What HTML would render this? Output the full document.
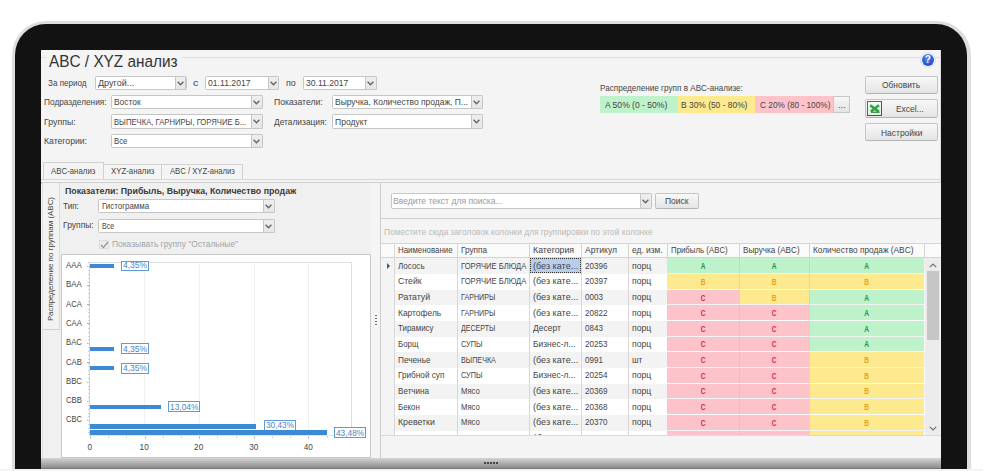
<!DOCTYPE html>
<html><head><meta charset="utf-8"><style>
html,body{margin:0;padding:0;width:983px;height:471px;overflow:hidden;background:#fff;}
body{position:relative;font-family:"Liberation Sans", sans-serif;}
.t{position:absolute;white-space:nowrap;line-height:1;font-family:"Liberation Sans", sans-serif;}
</style></head><body>
<div style="position:absolute;left:11.5px;top:20.5px;width:959px;height:470px;border-radius:34px 34px 0 0;background:#dedede;"></div>
<div style="position:absolute;left:15px;top:23.5px;width:952px;height:445.2px;border-radius:31px 31px 0 0;background:#121212;"></div>
<div style="position:absolute;left:0;top:468.7px;width:983px;height:3px;background:#f4f4f4;"></div>
<div style="position:absolute;left:41px;top:50px;width:900px;height:418.7px;background:#f4f4f4;overflow:hidden;"></div>
<div style="position:absolute;left:41px;top:56.5px;width:5px;height:1px;background:#dedede"></div>
<div style="position:absolute;left:182px;top:56.5px;width:759px;height:1px;background:#dedede"></div>
<div class="t" style="left:49.3px;top:53.45px;font-size:16.3px;color:#333;font-weight:400;transform:scaleX(0.9433);transform-origin:0 0;">ABC / XYZ анализ</div>
<div class="t" style="left:48.3px;top:79.78px;font-size:8.2px;color:#454545;font-weight:400;transform:scaleX(0.9884);transform-origin:0 0;">За период</div>
<div style="position:absolute;left:95px;top:75.7px;width:91.5px;height:14px;background:#fff;box-sizing:border-box;border:1px solid #c6c6c6;border-radius:1.5px;"></div>
<div style="position:absolute;left:175.3px;top:75.7px;width:11.2px;height:14px;background:linear-gradient(#eeeeee,#e6e6e6);box-sizing:border-box;border:1px solid #c6c6c6;border-radius:0 1.5px 1.5px 0;"></div>
<svg width="7" height="5" viewBox="0 0 7 5" style="position:absolute;left:177.4px;top:80.5px"><path d="M0.6 0.8 L3.5 3.8 L6.4 0.8" fill="none" stroke="#666" stroke-width="1.4"/></svg>
<div class="t" style="left:97.6px;top:79.73px;font-size:8.2px;color:#454545;font-weight:400;transform:scaleX(1.1036);transform-origin:0 0;">Другой...</div>
<div class="t" style="left:193px;top:79.78px;font-size:8.2px;color:#454545;font-weight:400;transform:scaleX(1.3453);transform-origin:0 0;">с</div>
<div style="position:absolute;left:205.3px;top:75.7px;width:74.2px;height:14px;background:#fff;box-sizing:border-box;border:1px solid #c6c6c6;border-radius:1.5px;"></div>
<div style="position:absolute;left:267.7px;top:75.7px;width:11.8px;height:14px;background:linear-gradient(#eeeeee,#e6e6e6);box-sizing:border-box;border:1px solid #c6c6c6;border-radius:0 1.5px 1.5px 0;"></div>
<svg width="7" height="5" viewBox="0 0 7 5" style="position:absolute;left:270.09999999999997px;top:80.5px"><path d="M0.6 0.8 L3.5 3.8 L6.4 0.8" fill="none" stroke="#666" stroke-width="1.4"/></svg>
<div class="t" style="left:207.7px;top:79.73px;font-size:8.2px;color:#454545;font-weight:400;transform:scaleX(1.0534);transform-origin:0 0;">01.11.2017</div>
<div class="t" style="left:285.6px;top:79.78px;font-size:8.2px;color:#454545;font-weight:400;transform:scaleX(1.0952);transform-origin:0 0;">по</div>
<div style="position:absolute;left:302.9px;top:75.7px;width:73.7px;height:14px;background:#fff;box-sizing:border-box;border:1px solid #c6c6c6;border-radius:1.5px;"></div>
<div style="position:absolute;left:364.99999999999994px;top:75.7px;width:11.6px;height:14px;background:linear-gradient(#eeeeee,#e6e6e6);box-sizing:border-box;border:1px solid #c6c6c6;border-radius:0 1.5px 1.5px 0;"></div>
<svg width="7" height="5" viewBox="0 0 7 5" style="position:absolute;left:367.29999999999995px;top:80.5px"><path d="M0.6 0.8 L3.5 3.8 L6.4 0.8" fill="none" stroke="#666" stroke-width="1.4"/></svg>
<div class="t" style="left:306px;top:79.73px;font-size:8.2px;color:#454545;font-weight:400;transform:scaleX(1.0484);transform-origin:0 0;">30.11.2017</div>
<div class="t" style="left:44px;top:99.28px;font-size:8.2px;color:#454545;font-weight:400;transform:scaleX(1.0126);transform-origin:0 0;">Подразделения:</div>
<div style="position:absolute;left:111px;top:94.6px;width:151.6px;height:14.7px;background:#fff;box-sizing:border-box;border:1px solid #c6c6c6;border-radius:1.5px;"></div>
<div style="position:absolute;left:250.70000000000002px;top:94.6px;width:11.9px;height:14.7px;background:linear-gradient(#eeeeee,#e6e6e6);box-sizing:border-box;border:1px solid #c6c6c6;border-radius:0 1.5px 1.5px 0;"></div>
<svg width="7" height="5" viewBox="0 0 7 5" style="position:absolute;left:253.15px;top:99.74999999999999px"><path d="M0.6 0.8 L3.5 3.8 L6.4 0.8" fill="none" stroke="#666" stroke-width="1.4"/></svg>
<div class="t" style="left:113.7px;top:98.98px;font-size:8.2px;color:#454545;font-weight:400;transform:scaleX(1.0274);transform-origin:0 0;">Восток</div>
<div class="t" style="left:273.8px;top:99.28px;font-size:8.2px;color:#454545;font-weight:400;transform:scaleX(1.0490);transform-origin:0 0;">Показатели:</div>
<div style="position:absolute;left:332.2px;top:94.5px;width:150.6px;height:14.8px;background:#fff;box-sizing:border-box;border:1px solid #c6c6c6;border-radius:1.5px;"></div>
<div style="position:absolute;left:470.59999999999997px;top:94.5px;width:12.2px;height:14.8px;background:linear-gradient(#eeeeee,#e6e6e6);box-sizing:border-box;border:1px solid #c6c6c6;border-radius:0 1.5px 1.5px 0;"></div>
<svg width="7" height="5" viewBox="0 0 7 5" style="position:absolute;left:473.2px;top:99.7px"><path d="M0.6 0.8 L3.5 3.8 L6.4 0.8" fill="none" stroke="#666" stroke-width="1.4"/></svg>
<div class="t" style="left:334.6px;top:98.93px;font-size:8.2px;color:#454545;font-weight:400;transform:scaleX(1.0328);transform-origin:0 0;">Выручка, Количество продаж, П...</div>
<div class="t" style="left:44px;top:118.88px;font-size:8.2px;color:#454545;font-weight:400;transform:scaleX(1.0703);transform-origin:0 0;">Группы:</div>
<div style="position:absolute;left:111px;top:114.4px;width:151.6px;height:14.4px;background:#fff;box-sizing:border-box;border:1px solid #c6c6c6;border-radius:1.5px;"></div>
<div style="position:absolute;left:250.70000000000002px;top:114.4px;width:11.9px;height:14.4px;background:linear-gradient(#eeeeee,#e6e6e6);box-sizing:border-box;border:1px solid #c6c6c6;border-radius:0 1.5px 1.5px 0;"></div>
<svg width="7" height="5" viewBox="0 0 7 5" style="position:absolute;left:253.15px;top:119.4px"><path d="M0.6 0.8 L3.5 3.8 L6.4 0.8" fill="none" stroke="#666" stroke-width="1.4"/></svg>
<div class="t" style="left:113.7px;top:118.63px;font-size:8.2px;color:#454545;font-weight:400;transform:scaleX(0.9375);transform-origin:0 0;">ВЫПЕЧКА, ГАРНИРЫ, ГОРЯЧИЕ Б...</div>
<div class="t" style="left:274px;top:118.88px;font-size:8.2px;color:#454545;font-weight:400;transform:scaleX(1.0240);transform-origin:0 0;">Детализация:</div>
<div style="position:absolute;left:332.2px;top:114.4px;width:150.6px;height:14.3px;background:#fff;box-sizing:border-box;border:1px solid #c6c6c6;border-radius:1.5px;"></div>
<div style="position:absolute;left:470.59999999999997px;top:114.4px;width:12.2px;height:14.3px;background:linear-gradient(#eeeeee,#e6e6e6);box-sizing:border-box;border:1px solid #c6c6c6;border-radius:0 1.5px 1.5px 0;"></div>
<svg width="7" height="5" viewBox="0 0 7 5" style="position:absolute;left:473.2px;top:119.35000000000001px"><path d="M0.6 0.8 L3.5 3.8 L6.4 0.8" fill="none" stroke="#666" stroke-width="1.4"/></svg>
<div class="t" style="left:334.6px;top:118.58px;font-size:8.2px;color:#454545;font-weight:400;transform:scaleX(1.0423);transform-origin:0 0;">Продукт</div>
<div class="t" style="left:44px;top:138.08px;font-size:8.2px;color:#454545;font-weight:400;transform:scaleX(1.0573);transform-origin:0 0;">Категории:</div>
<div style="position:absolute;left:111px;top:133.6px;width:151.6px;height:14.4px;background:#fff;box-sizing:border-box;border:1px solid #c6c6c6;border-radius:1.5px;"></div>
<div style="position:absolute;left:250.70000000000002px;top:133.6px;width:11.9px;height:14.4px;background:linear-gradient(#eeeeee,#e6e6e6);box-sizing:border-box;border:1px solid #c6c6c6;border-radius:0 1.5px 1.5px 0;"></div>
<svg width="7" height="5" viewBox="0 0 7 5" style="position:absolute;left:253.15px;top:138.6px"><path d="M0.6 0.8 L3.5 3.8 L6.4 0.8" fill="none" stroke="#666" stroke-width="1.4"/></svg>
<div class="t" style="left:113.7px;top:137.83px;font-size:8.2px;color:#454545;font-weight:400;transform:scaleX(0.9475);transform-origin:0 0;">Все</div>
<div class="t" style="left:599.5px;top:85.08px;font-size:8.2px;color:#454545;font-weight:400;transform:scaleX(0.9933);transform-origin:0 0;">Распределение групп в ABC-анализе:</div>
<div style="position:absolute;left:600px;top:96.3px;width:78px;height:17px;background:#bdf2cb"></div>
<div class="t" style="left:604.5px;top:102.08px;font-size:8.2px;color:#454545;font-weight:400;transform:scaleX(1.0453);transform-origin:0 0;">A 50% (0 - 50%)</div>
<div style="position:absolute;left:678px;top:96.3px;width:77.3px;height:17px;background:#fde98e"></div>
<div class="t" style="left:681.4px;top:102.08px;font-size:8.2px;color:#454545;font-weight:400;transform:scaleX(1.0277);transform-origin:0 0;">B 30% (50 - 80%)</div>
<div style="position:absolute;left:755.3px;top:96.3px;width:77.7px;height:17px;background:#fdc3cb"></div>
<div class="t" style="left:759.9px;top:102.08px;font-size:8.2px;color:#454545;font-weight:400;transform:scaleX(1.0110);transform-origin:0 0;">C 20% (80 - 100%)</div>
<div style="position:absolute;left:833px;top:96.3px;width:17.3px;height:17px;box-sizing:border-box;border:1px solid #c6c6c6;background:linear-gradient(#f6f6f6,#e4e4e4);"></div>
<div class="t" style="left:838px;top:102.08px;font-size:8.2px;color:#454545;font-weight:400;transform:scaleX(1.1239);transform-origin:0 0;">...</div>
<div style="position:absolute;left:920.8px;top:53px;width:14px;height:14px;border-radius:50%;background:#fbfcff;box-shadow:0 0 0 0.6px #c4ccd8;"></div>
<div style="position:absolute;left:921.9px;top:54.1px;width:11.8px;height:11.8px;border-radius:50%;background:radial-gradient(circle at 45% 35%,#4f84ea,#2248c8 80%);"></div>
<div class="t" style="left:921.8px;top:55.3px;width:12px;text-align:center;font-size:10px;font-weight:700;color:#fff;">?</div>
<div style="position:absolute;left:864.8px;top:75.7px;width:73px;height:18.6px;box-sizing:border-box;border:1px solid #c4c4c4;border-bottom-color:#b4b4b4;border-radius:2px;background:linear-gradient(#f8f8f8,#e4e4e4);"></div>
<div class="t" style="left:882.1px;top:82.28px;font-size:8.2px;color:#454545;font-weight:400;transform:scaleX(1.0280);transform-origin:0 0;">Обновить</div>
<div style="position:absolute;left:864.8px;top:99.3px;width:73px;height:18.4px;box-sizing:border-box;border:1px solid #c4c4c4;border-bottom-color:#b4b4b4;border-radius:2px;background:linear-gradient(#f8f8f8,#e4e4e4);"></div>
<div style="position:absolute;left:867px;top:101px;width:15px;height:15px;box-sizing:border-box;border:1.2px solid #35804a;border-right-color:#2a6a3a;border-bottom-color:#2a6a3a;background:linear-gradient(#f4fbf4,#dff0df);"></div>
<svg width="12" height="10" viewBox="0 0 12 10" style="position:absolute;left:868.5px;top:103.5px"><path d="M1.2 1.2 L9.8 7.6 M10 1.2 L1.8 7.6" stroke="#2fa444" stroke-width="2.6" fill="none"/><path d="M2 8.2 L10.5 8.2" stroke="#23803a" stroke-width="1.2"/></svg>
<div class="t" style="left:895.9px;top:105.88px;font-size:8.2px;color:#454545;font-weight:400;transform:scaleX(1.0282);transform-origin:0 0;">Excel...</div>
<div style="position:absolute;left:864.8px;top:123.3px;width:73px;height:18.1px;box-sizing:border-box;border:1px solid #c4c4c4;border-bottom-color:#b4b4b4;border-radius:2px;background:linear-gradient(#f8f8f8,#e4e4e4);"></div>
<div class="t" style="left:880.6px;top:129.58px;font-size:8.2px;color:#454545;font-weight:400;transform:scaleX(1.0314);transform-origin:0 0;">Настройки</div>
<div style="position:absolute;left:42.7px;top:162px;width:61.3px;height:18px;box-sizing:border-box;border:1px solid #d2d2d2;border-bottom:none;background:#f4f4f4;"></div>
<div class="t" style="left:50.8px;top:167.58px;font-size:8.2px;color:#454545;font-weight:400;transform:scaleX(0.9585);transform-origin:0 0;">ABC-анализ</div>
<div style="position:absolute;left:104px;top:164.2px;width:58px;height:15.5px;box-sizing:border-box;border:1px solid #d2d2d2;border-left:none;border-bottom:none;background:#f4f4f4;"></div>
<div class="t" style="left:110.6px;top:167.88px;font-size:8.2px;color:#454545;font-weight:400;transform:scaleX(0.9556);transform-origin:0 0;">XYZ-анализ</div>
<div style="position:absolute;left:162px;top:164.2px;width:81px;height:15.5px;box-sizing:border-box;border:1px solid #d2d2d2;border-left:none;border-bottom:none;background:#f4f4f4;"></div>
<div class="t" style="left:170px;top:167.88px;font-size:8.2px;color:#454545;font-weight:400;transform:scaleX(0.9380);transform-origin:0 0;">ABC / XYZ-анализ</div>
<div style="position:absolute;left:41px;top:179.3px;width:900px;height:1px;background:#d6d6d6"></div>
<div style="position:absolute;left:41px;top:182.3px;width:900px;height:1.5px;background:#cfcfcf"></div>
<div style="position:absolute;left:939.8px;top:50px;width:1.2px;height:408px;background:#dedede"></div>
<div style="position:absolute;left:42px;top:183px;width:329px;height:276px;background:#f0f0f0;border-left:1px solid #e2e2e2;box-sizing:border-box;"></div>
<div style="position:absolute;left:42.5px;top:183px;width:17.8px;height:146.8px;box-sizing:border-box;border-right:1px solid #dadada;border-bottom:1px solid #d0d0d0;background:#f3f3f3;"></div>
<div class="t" style="left:50.8px;top:259.2px;font-size:7.95px;color:#454545;transform:translate(-50%,-50%) rotate(-90deg);">Распределение по группам (ABC)</div>
<div class="t" style="left:65.2px;top:187.02px;font-size:8.6px;color:#3a3a3a;font-weight:700;transform:scaleX(1.0231);transform-origin:0 0;">Показатели: Прибыль, Выручка, Количество продаж</div>
<div class="t" style="left:63.1px;top:202.68px;font-size:8.2px;color:#454545;font-weight:400;transform:scaleX(0.9976);transform-origin:0 0;">Тип:</div>
<div style="position:absolute;left:98.3px;top:199.2px;width:176.5px;height:14.2px;background:#fff;box-sizing:border-box;border:1px solid #c6c6c6;border-radius:1.5px;"></div>
<div style="position:absolute;left:262.8px;top:199.2px;width:12px;height:14.2px;background:linear-gradient(#eeeeee,#e6e6e6);box-sizing:border-box;border:1px solid #c6c6c6;border-radius:0 1.5px 1.5px 0;"></div>
<svg width="7" height="5" viewBox="0 0 7 5" style="position:absolute;left:265.3px;top:204.1px"><path d="M0.6 0.8 L3.5 3.8 L6.4 0.8" fill="none" stroke="#666" stroke-width="1.4"/></svg>
<div class="t" style="left:101.9px;top:203.33px;font-size:8.2px;color:#454545;font-weight:400;transform:scaleX(0.9675);transform-origin:0 0;">Гистограмма</div>
<div class="t" style="left:63.1px;top:222.28px;font-size:8.2px;color:#454545;font-weight:400;transform:scaleX(1.0393);transform-origin:0 0;">Группы:</div>
<div style="position:absolute;left:98.3px;top:218.8px;width:176.5px;height:14px;background:#fff;box-sizing:border-box;border:1px solid #c6c6c6;border-radius:1.5px;"></div>
<div style="position:absolute;left:262.8px;top:218.8px;width:12px;height:14px;background:linear-gradient(#eeeeee,#e6e6e6);box-sizing:border-box;border:1px solid #c6c6c6;border-radius:0 1.5px 1.5px 0;"></div>
<svg width="7" height="5" viewBox="0 0 7 5" style="position:absolute;left:265.3px;top:223.60000000000002px"><path d="M0.6 0.8 L3.5 3.8 L6.4 0.8" fill="none" stroke="#666" stroke-width="1.4"/></svg>
<div class="t" style="left:101.9px;top:222.83px;font-size:8.2px;color:#454545;font-weight:400;transform:scaleX(0.8661);transform-origin:0 0;">Все</div>
<div style="position:absolute;left:99.3px;top:240.2px;width:9.6px;height:9px;box-sizing:border-box;border:1px solid #dcdcdc;background:#ececec;"></div>
<svg width="9" height="8" viewBox="0 0 9 8" style="position:absolute;left:100px;top:241px"><path d="M1 4 L3.4 6.4 L8 1" fill="none" stroke="#9a9a9a" stroke-width="1.4"/></svg>
<div class="t" style="left:111.5px;top:241.48px;font-size:8.2px;color:#a4a4a4;font-weight:400;transform:scaleX(1.0295);transform-origin:0 0;">Показывать группу "Остальные"</div>
<div style="position:absolute;left:60.6px;top:254px;width:310.2px;height:204px;background:#fff;border:1px solid #c8c8c8;box-sizing:border-box;"></div>
<div style="position:absolute;left:89.5px;top:262.4px;width:261.5px;height:1px;background:#dedede"></div>
<div style="position:absolute;left:350.5px;top:262.4px;width:1px;height:172.2px;background:#dedede"></div>
<div style="position:absolute;left:144.2px;top:262.4px;width:1px;height:172.2px;background:#f0f0f0"></div>
<div style="position:absolute;left:198.7px;top:262.4px;width:1px;height:172.2px;background:#f0f0f0"></div>
<div style="position:absolute;left:253.8px;top:262.4px;width:1px;height:172.2px;background:#f0f0f0"></div>
<div style="position:absolute;left:308.4px;top:262.4px;width:1px;height:172.2px;background:#f0f0f0"></div>
<div style="position:absolute;left:89.4px;top:262.4px;width:1px;height:173px;background:#d2d2d2"></div>
<div style="position:absolute;left:89.4px;top:434.8px;width:262px;height:1px;background:#e4e4e4"></div>
<div style="position:absolute;left:89.9px;top:435.6px;width:0.8px;height:3.2px;background:#c4c4c4"></div>
<div style="position:absolute;left:108.10000000000001px;top:435.6px;width:0.8px;height:2.2px;background:#d6d6d6"></div>
<div style="position:absolute;left:126.30000000000001px;top:435.6px;width:0.8px;height:2.2px;background:#d6d6d6"></div>
<div style="position:absolute;left:144.5px;top:435.6px;width:0.8px;height:3.2px;background:#c4c4c4"></div>
<div style="position:absolute;left:162.7px;top:435.6px;width:0.8px;height:2.2px;background:#d6d6d6"></div>
<div style="position:absolute;left:180.9px;top:435.6px;width:0.8px;height:2.2px;background:#d6d6d6"></div>
<div style="position:absolute;left:199.10000000000002px;top:435.6px;width:0.8px;height:3.2px;background:#c4c4c4"></div>
<div style="position:absolute;left:217.3px;top:435.6px;width:0.8px;height:2.2px;background:#d6d6d6"></div>
<div style="position:absolute;left:235.5px;top:435.6px;width:0.8px;height:2.2px;background:#d6d6d6"></div>
<div style="position:absolute;left:253.70000000000002px;top:435.6px;width:0.8px;height:3.2px;background:#c4c4c4"></div>
<div style="position:absolute;left:271.9px;top:435.6px;width:0.8px;height:2.2px;background:#d6d6d6"></div>
<div style="position:absolute;left:290.1px;top:435.6px;width:0.8px;height:2.2px;background:#d6d6d6"></div>
<div style="position:absolute;left:308.3px;top:435.6px;width:0.8px;height:3.2px;background:#c4c4c4"></div>
<div style="position:absolute;left:326.5px;top:435.6px;width:0.8px;height:2.2px;background:#d6d6d6"></div>
<div class="t" style="left:66.4px;top:262.28px;font-size:8.2px;color:#444;font-weight:400;transform:scaleX(0.9689);transform-origin:0 0;">AAA</div>
<div style="position:absolute;left:86.5px;top:265.7px;width:3px;height:1px;background:#b8b8b8"></div>
<div class="t" style="left:66.4px;top:281.38px;font-size:8.2px;color:#444;font-weight:400;transform:scaleX(0.9689);transform-origin:0 0;">BAA</div>
<div style="position:absolute;left:86.5px;top:284.8px;width:3px;height:1px;background:#b8b8b8"></div>
<div class="t" style="left:66.4px;top:300.68px;font-size:8.2px;color:#444;font-weight:400;transform:scaleX(0.9419);transform-origin:0 0;">ACA</div>
<div style="position:absolute;left:86.5px;top:304.1px;width:3px;height:1px;background:#b8b8b8"></div>
<div class="t" style="left:66.4px;top:319.78px;font-size:8.2px;color:#444;font-weight:400;transform:scaleX(0.9419);transform-origin:0 0;">CAA</div>
<div style="position:absolute;left:86.5px;top:323.2px;width:3px;height:1px;background:#b8b8b8"></div>
<div class="t" style="left:66.4px;top:339.48px;font-size:8.2px;color:#444;font-weight:400;transform:scaleX(0.9419);transform-origin:0 0;">BAC</div>
<div style="position:absolute;left:86.5px;top:342.9px;width:3px;height:1px;background:#b8b8b8"></div>
<div class="t" style="left:66.4px;top:358.58px;font-size:8.2px;color:#444;font-weight:400;transform:scaleX(0.9419);transform-origin:0 0;">CAB</div>
<div style="position:absolute;left:86.5px;top:362.0px;width:3px;height:1px;background:#b8b8b8"></div>
<div class="t" style="left:66.4px;top:378.18px;font-size:8.2px;color:#444;font-weight:400;transform:scaleX(0.9419);transform-origin:0 0;">BBC</div>
<div style="position:absolute;left:86.5px;top:381.6px;width:3px;height:1px;background:#b8b8b8"></div>
<div class="t" style="left:66.4px;top:397.28px;font-size:8.2px;color:#444;font-weight:400;transform:scaleX(0.9419);transform-origin:0 0;">CBB</div>
<div style="position:absolute;left:86.5px;top:400.7px;width:3px;height:1px;background:#b8b8b8"></div>
<div class="t" style="left:66.4px;top:416.38px;font-size:8.2px;color:#444;font-weight:400;transform:scaleX(0.9163);transform-origin:0 0;">CBC</div>
<div style="position:absolute;left:86.5px;top:419.8px;width:3px;height:1px;background:#b8b8b8"></div>
<div style="position:absolute;left:88px;top:262.4px;width:1.5px;height:0.8px;background:#cfcfcf"></div>
<div style="position:absolute;left:88px;top:266.25px;width:1.5px;height:0.8px;background:#cfcfcf"></div>
<div style="position:absolute;left:88px;top:270.1px;width:1.5px;height:0.8px;background:#cfcfcf"></div>
<div style="position:absolute;left:88px;top:273.95000000000005px;width:1.5px;height:0.8px;background:#cfcfcf"></div>
<div style="position:absolute;left:88px;top:277.80000000000007px;width:1.5px;height:0.8px;background:#cfcfcf"></div>
<div style="position:absolute;left:88px;top:281.6500000000001px;width:1.5px;height:0.8px;background:#cfcfcf"></div>
<div style="position:absolute;left:88px;top:285.5000000000001px;width:1.5px;height:0.8px;background:#cfcfcf"></div>
<div style="position:absolute;left:88px;top:289.35000000000014px;width:1.5px;height:0.8px;background:#cfcfcf"></div>
<div style="position:absolute;left:88px;top:293.20000000000016px;width:1.5px;height:0.8px;background:#cfcfcf"></div>
<div style="position:absolute;left:88px;top:297.0500000000002px;width:1.5px;height:0.8px;background:#cfcfcf"></div>
<div style="position:absolute;left:88px;top:300.9000000000002px;width:1.5px;height:0.8px;background:#cfcfcf"></div>
<div style="position:absolute;left:88px;top:304.7500000000002px;width:1.5px;height:0.8px;background:#cfcfcf"></div>
<div style="position:absolute;left:88px;top:308.60000000000025px;width:1.5px;height:0.8px;background:#cfcfcf"></div>
<div style="position:absolute;left:88px;top:312.4500000000003px;width:1.5px;height:0.8px;background:#cfcfcf"></div>
<div style="position:absolute;left:88px;top:316.3000000000003px;width:1.5px;height:0.8px;background:#cfcfcf"></div>
<div style="position:absolute;left:88px;top:320.1500000000003px;width:1.5px;height:0.8px;background:#cfcfcf"></div>
<div style="position:absolute;left:88px;top:324.00000000000034px;width:1.5px;height:0.8px;background:#cfcfcf"></div>
<div style="position:absolute;left:88px;top:327.85000000000036px;width:1.5px;height:0.8px;background:#cfcfcf"></div>
<div style="position:absolute;left:88px;top:331.7000000000004px;width:1.5px;height:0.8px;background:#cfcfcf"></div>
<div style="position:absolute;left:88px;top:335.5500000000004px;width:1.5px;height:0.8px;background:#cfcfcf"></div>
<div style="position:absolute;left:88px;top:339.40000000000043px;width:1.5px;height:0.8px;background:#cfcfcf"></div>
<div style="position:absolute;left:88px;top:343.25000000000045px;width:1.5px;height:0.8px;background:#cfcfcf"></div>
<div style="position:absolute;left:88px;top:347.1000000000005px;width:1.5px;height:0.8px;background:#cfcfcf"></div>
<div style="position:absolute;left:88px;top:350.9500000000005px;width:1.5px;height:0.8px;background:#cfcfcf"></div>
<div style="position:absolute;left:88px;top:354.8000000000005px;width:1.5px;height:0.8px;background:#cfcfcf"></div>
<div style="position:absolute;left:88px;top:358.65000000000055px;width:1.5px;height:0.8px;background:#cfcfcf"></div>
<div style="position:absolute;left:88px;top:362.50000000000057px;width:1.5px;height:0.8px;background:#cfcfcf"></div>
<div style="position:absolute;left:88px;top:366.3500000000006px;width:1.5px;height:0.8px;background:#cfcfcf"></div>
<div style="position:absolute;left:88px;top:370.2000000000006px;width:1.5px;height:0.8px;background:#cfcfcf"></div>
<div style="position:absolute;left:88px;top:374.05000000000064px;width:1.5px;height:0.8px;background:#cfcfcf"></div>
<div style="position:absolute;left:88px;top:377.90000000000066px;width:1.5px;height:0.8px;background:#cfcfcf"></div>
<div style="position:absolute;left:88px;top:381.7500000000007px;width:1.5px;height:0.8px;background:#cfcfcf"></div>
<div style="position:absolute;left:88px;top:385.6000000000007px;width:1.5px;height:0.8px;background:#cfcfcf"></div>
<div style="position:absolute;left:88px;top:389.4500000000007px;width:1.5px;height:0.8px;background:#cfcfcf"></div>
<div style="position:absolute;left:88px;top:393.30000000000075px;width:1.5px;height:0.8px;background:#cfcfcf"></div>
<div style="position:absolute;left:88px;top:397.1500000000008px;width:1.5px;height:0.8px;background:#cfcfcf"></div>
<div style="position:absolute;left:88px;top:401.0000000000008px;width:1.5px;height:0.8px;background:#cfcfcf"></div>
<div style="position:absolute;left:88px;top:404.8500000000008px;width:1.5px;height:0.8px;background:#cfcfcf"></div>
<div style="position:absolute;left:88px;top:408.70000000000084px;width:1.5px;height:0.8px;background:#cfcfcf"></div>
<div style="position:absolute;left:88px;top:412.55000000000086px;width:1.5px;height:0.8px;background:#cfcfcf"></div>
<div style="position:absolute;left:88px;top:416.4000000000009px;width:1.5px;height:0.8px;background:#cfcfcf"></div>
<div style="position:absolute;left:88px;top:420.2500000000009px;width:1.5px;height:0.8px;background:#cfcfcf"></div>
<div style="position:absolute;left:88px;top:424.10000000000093px;width:1.5px;height:0.8px;background:#cfcfcf"></div>
<div style="position:absolute;left:88px;top:427.95000000000095px;width:1.5px;height:0.8px;background:#cfcfcf"></div>
<div style="position:absolute;left:88px;top:431.800000000001px;width:1.5px;height:0.8px;background:#cfcfcf"></div>
<div class="t" style="left:87.60000000000001px;top:444.38px;font-size:8.2px;color:#444;font-weight:400;">0</div>
<div class="t" style="left:139.6px;top:444.38px;font-size:8.2px;color:#444;font-weight:400;">10</div>
<div class="t" style="left:194.1px;top:444.38px;font-size:8.2px;color:#444;font-weight:400;">20</div>
<div class="t" style="left:249.20000000000002px;top:444.38px;font-size:8.2px;color:#444;font-weight:400;">30</div>
<div class="t" style="left:303.79999999999995px;top:444.38px;font-size:8.2px;color:#444;font-weight:400;">40</div>
<div style="position:absolute;left:89.9px;top:263.9px;width:24.19999999999999px;height:3.8000000000000114px;background:#3d8ad4"></div>
<div style="position:absolute;left:121px;top:260.6px;width:28px;height:10.199999999999989px;box-sizing:border-box;border:1px solid #5d9ad8;background:#fff;"></div>
<div class="t" style="left:123px;top:261.30px;font-size:8.4px;color:#4a86cc;font-weight:400;transform:scaleX(1.0151);transform-origin:0 0;">4,35%</div>
<div style="position:absolute;left:89.9px;top:346.7px;width:24.19999999999999px;height:4.300000000000011px;background:#3d8ad4"></div>
<div style="position:absolute;left:121px;top:343px;width:28px;height:11px;box-sizing:border-box;border:1px solid #5d9ad8;background:#fff;"></div>
<div class="t" style="left:123px;top:344.50px;font-size:8.4px;color:#4a86cc;font-weight:400;transform:scaleX(1.0151);transform-origin:0 0;">4,35%</div>
<div style="position:absolute;left:89.9px;top:366.4px;width:24.19999999999999px;height:4.0px;background:#3d8ad4"></div>
<div style="position:absolute;left:121px;top:362.6px;width:28px;height:11.099999999999966px;box-sizing:border-box;border:1px solid #5d9ad8;background:#fff;"></div>
<div class="t" style="left:123px;top:364.20px;font-size:8.4px;color:#4a86cc;font-weight:400;transform:scaleX(1.0151);transform-origin:0 0;">4,35%</div>
<div style="position:absolute;left:89.9px;top:405px;width:71.1px;height:4.100000000000023px;background:#3d8ad4"></div>
<div style="position:absolute;left:168.2px;top:400.7px;width:32.30000000000001px;height:11.5px;box-sizing:border-box;border:1px solid #5d9ad8;background:#fff;"></div>
<div class="t" style="left:170.2px;top:402.70px;font-size:8.4px;color:#4a86cc;font-weight:400;transform:scaleX(0.9998);transform-origin:0 0;">13,04%</div>
<div style="position:absolute;left:89.9px;top:423.6px;width:166.6px;height:5.099999999999966px;background:#3d8ad4"></div>
<div style="position:absolute;left:263.6px;top:419.8px;width:32.0px;height:10.899999999999977px;box-sizing:border-box;border:1px solid #5d9ad8;background:#fff;"></div>
<div class="t" style="left:265.6px;top:421.20px;font-size:8.4px;color:#4a86cc;font-weight:400;transform:scaleX(0.9890);transform-origin:0 0;">30,43%</div>
<div style="position:absolute;left:89.9px;top:430.4px;width:237.49999999999997px;height:4.400000000000034px;background:#3d8ad4"></div>
<div style="position:absolute;left:334.3px;top:426.7px;width:32.099999999999966px;height:11.400000000000034px;box-sizing:border-box;border:1px solid #5d9ad8;background:#fff;"></div>
<div class="t" style="left:336.3px;top:428.60px;font-size:8.4px;color:#4a86cc;font-weight:400;transform:scaleX(0.9926);transform-origin:0 0;">43,48%</div>
<div style="position:absolute;left:371px;top:183px;width:9px;height:276px;background:#f5f5f5"></div>
<div style="position:absolute;left:375.3px;top:315.0px;width:1.5px;height:1.2px;background:#6a6a6a"></div>
<div style="position:absolute;left:375.3px;top:318.0px;width:1.5px;height:1.2px;background:#6a6a6a"></div>
<div style="position:absolute;left:375.3px;top:321.0px;width:1.5px;height:1.2px;background:#6a6a6a"></div>
<div style="position:absolute;left:375.3px;top:324.0px;width:1.5px;height:1.2px;background:#6a6a6a"></div>
<div style="position:absolute;left:380px;top:183px;width:561px;height:275.6px;background:#f4f4f4;box-sizing:border-box;border-left:1px solid #d6d6d6;border-bottom:1px solid #c8c8c8;"></div>
<div style="position:absolute;left:390.5px;top:193.3px;width:261.1px;height:15.3px;background:#fff;box-sizing:border-box;border:1px solid #c6c6c6;border-radius:1.5px;"></div>
<div style="position:absolute;left:639.6px;top:193.3px;width:12px;height:15.3px;background:linear-gradient(#eeeeee,#e6e6e6);box-sizing:border-box;border:1px solid #c6c6c6;border-radius:0 1.5px 1.5px 0;"></div>
<svg width="7" height="5" viewBox="0 0 7 5" style="position:absolute;left:642.1px;top:198.75000000000003px"><path d="M0.6 0.8 L3.5 3.8 L6.4 0.8" fill="none" stroke="#666" stroke-width="1.4"/></svg>
<div class="t" style="left:393px;top:197.98px;font-size:8.2px;color:#9a9a9a;font-weight:400;transform:scaleX(1.0441);transform-origin:0 0;">Введите текст для поиска...</div>
<div style="position:absolute;left:654.7px;top:192.8px;width:44.6px;height:16.3px;box-sizing:border-box;border:1px solid #c4c4c4;border-bottom-color:#b4b4b4;border-radius:2px;background:linear-gradient(#f8f8f8,#e4e4e4);"></div>
<div class="t" style="left:665.1px;top:198.08px;font-size:8.2px;color:#454545;font-weight:400;transform:scaleX(1.0361);transform-origin:0 0;">Поиск</div>
<div style="position:absolute;left:380px;top:218px;width:561px;height:1px;background:#cfcfcf"></div>
<div class="t" style="left:384.4px;top:229.08px;font-size:8.2px;color:#bababa;font-weight:400;transform:scaleX(1.0219);transform-origin:0 0;">Поместите сюда заголовок колонки для группировки по этой колонке</div>
<div style="position:absolute;left:380px;top:243px;width:561px;height:14.8px;background:#fafafa;border-top:1px solid #d4d4d4;border-bottom:1px solid #d4d4d4;box-sizing:border-box;"></div>
<div style="position:absolute;left:394px;top:243px;width:1px;height:14.8px;background:#d4d4d4"></div>
<div class="t" style="left:397.7px;top:246.98px;font-size:8.2px;color:#454545;font-weight:400;transform:scaleX(0.9614);transform-origin:0 0;">Наименование</div>
<div style="position:absolute;left:457px;top:243px;width:1px;height:14.8px;background:#d4d4d4"></div>
<div class="t" style="left:460.7px;top:246.98px;font-size:8.2px;color:#454545;font-weight:400;transform:scaleX(1.0058);transform-origin:0 0;">Группа</div>
<div style="position:absolute;left:529px;top:243px;width:1px;height:14.8px;background:#d4d4d4"></div>
<div class="t" style="left:532.7px;top:246.98px;font-size:8.2px;color:#454545;font-weight:400;transform:scaleX(1.0748);transform-origin:0 0;">Категория</div>
<div style="position:absolute;left:581px;top:243px;width:1px;height:14.8px;background:#d4d4d4"></div>
<div class="t" style="left:584.7px;top:246.98px;font-size:8.2px;color:#454545;font-weight:400;transform:scaleX(1.0491);transform-origin:0 0;">Артикул</div>
<div style="position:absolute;left:628px;top:243px;width:1px;height:14.8px;background:#d4d4d4"></div>
<div class="t" style="left:631.7px;top:246.98px;font-size:8.2px;color:#454545;font-weight:400;transform:scaleX(1.0260);transform-origin:0 0;">ед. изм.</div>
<div style="position:absolute;left:667px;top:243px;width:1px;height:14.8px;background:#d4d4d4"></div>
<div class="t" style="left:670.7px;top:246.98px;font-size:8.2px;color:#454545;font-weight:400;transform:scaleX(0.9573);transform-origin:0 0;">Прибыль (ABC)</div>
<div style="position:absolute;left:739px;top:243px;width:1px;height:14.8px;background:#d4d4d4"></div>
<div class="t" style="left:742.7px;top:246.98px;font-size:8.2px;color:#454545;font-weight:400;transform:scaleX(0.9921);transform-origin:0 0;">Выручка (ABC)</div>
<div style="position:absolute;left:809px;top:243px;width:1px;height:14.8px;background:#d4d4d4"></div>
<div class="t" style="left:812.7px;top:246.98px;font-size:8.2px;color:#454545;font-weight:400;transform:scaleX(1.0144);transform-origin:0 0;">Количество продаж (ABC)</div>
<div style="position:absolute;left:924.3px;top:243px;width:1px;height:14.8px;background:#d4d4d4"></div>
<div style="position:absolute;left:380px;top:258.3px;width:545px;height:176.3px;overflow:hidden;">
<div style="position:absolute;left:14.5px;top:0.0px;width:530.5px;height:15.66px;background:#f3f3f3"></div>
<div style="position:absolute;left:287px;top:0.0px;width:72px;height:14.66px;background:#bdf2cb"></div>
<div class="t" style="left:287px;width:72px;text-align:center;top:4.9px;font-size:8.2px;font-weight:700;color:#1f8f45;transform:scaleX(0.8);transform-origin:50% 0;">A</div>
<div style="position:absolute;left:359px;top:0.0px;width:70px;height:14.66px;background:#bdf2cb"></div>
<div class="t" style="left:359px;width:70px;text-align:center;top:4.9px;font-size:8.2px;font-weight:700;color:#1f8f45;transform:scaleX(0.8);transform-origin:50% 0;">A</div>
<div style="position:absolute;left:429px;top:0.0px;width:115.29999999999995px;height:14.66px;background:#bdf2cb"></div>
<div class="t" style="left:429px;width:115.29999999999995px;text-align:center;top:4.9px;font-size:8.2px;font-weight:700;color:#1f8f45;transform:scaleX(0.8);transform-origin:50% 0;">A</div>
<div style="position:absolute;left:150.29999999999995px;top:0.0px;width:51px;height:14.66px;background:#b8cdec;box-sizing:border-box;border:1px dotted #333;"></div>
<div class="t" style="left:17.7px;top:4.4px;font-size:8.2px;color:#454545;font-weight:400;transform:scaleX(0.9837);transform-origin:0 0;">Лосось</div>
<div class="t" style="left:80.7px;top:4.4px;font-size:8.2px;color:#454545;font-weight:400;transform:scaleX(0.9285);transform-origin:0 0;">ГОРЯЧИЕ БЛЮДА</div>
<div class="t" style="left:152.7px;top:4.4px;font-size:8.2px;color:#454545;font-weight:400;transform:scaleX(1.1065);transform-origin:0 0;">(без кате...</div>
<div class="t" style="left:204.7px;top:4.4px;font-size:8.2px;color:#454545;font-weight:400;transform:scaleX(0.9873);transform-origin:0 0;">20396</div>
<div class="t" style="left:251.7px;top:4.4px;font-size:8.2px;color:#454545;font-weight:400;transform:scaleX(1.0548);transform-origin:0 0;">порц</div>
<div style="position:absolute;left:14.5px;top:15.66px;width:530.5px;height:15.66px;background:#ffffff"></div>
<div style="position:absolute;left:287px;top:15.66px;width:72px;height:14.66px;background:#fde98e"></div>
<div class="t" style="left:287px;width:72px;text-align:center;top:20.560000000000002px;font-size:8.2px;font-weight:700;color:#e6a21e;transform:scaleX(0.8);transform-origin:50% 0;">B</div>
<div style="position:absolute;left:359px;top:15.66px;width:70px;height:14.66px;background:#fde98e"></div>
<div class="t" style="left:359px;width:70px;text-align:center;top:20.560000000000002px;font-size:8.2px;font-weight:700;color:#e6a21e;transform:scaleX(0.8);transform-origin:50% 0;">B</div>
<div style="position:absolute;left:429px;top:15.66px;width:115.29999999999995px;height:14.66px;background:#fde98e"></div>
<div class="t" style="left:429px;width:115.29999999999995px;text-align:center;top:20.560000000000002px;font-size:8.2px;font-weight:700;color:#e6a21e;transform:scaleX(0.8);transform-origin:50% 0;">B</div>
<div class="t" style="left:17.7px;top:20.060000000000002px;font-size:8.2px;color:#454545;font-weight:400;transform:scaleX(1.0562);transform-origin:0 0;">Стейк</div>
<div class="t" style="left:80.7px;top:20.060000000000002px;font-size:8.2px;color:#454545;font-weight:400;transform:scaleX(0.9285);transform-origin:0 0;">ГОРЯЧИЕ БЛЮДА</div>
<div class="t" style="left:152.7px;top:20.060000000000002px;font-size:8.2px;color:#454545;font-weight:400;transform:scaleX(1.1065);transform-origin:0 0;">(без кате...</div>
<div class="t" style="left:204.7px;top:20.060000000000002px;font-size:8.2px;color:#454545;font-weight:400;transform:scaleX(0.9873);transform-origin:0 0;">20397</div>
<div class="t" style="left:251.7px;top:20.060000000000002px;font-size:8.2px;color:#454545;font-weight:400;transform:scaleX(1.0548);transform-origin:0 0;">порц</div>
<div style="position:absolute;left:14.5px;top:31.32px;width:530.5px;height:15.66px;background:#f3f3f3"></div>
<div style="position:absolute;left:287px;top:31.32px;width:72px;height:14.66px;background:#fdc3cb"></div>
<div class="t" style="left:287px;width:72px;text-align:center;top:36.22px;font-size:8.2px;font-weight:700;color:#d42a40;transform:scaleX(0.8);transform-origin:50% 0;">C</div>
<div style="position:absolute;left:359px;top:31.32px;width:70px;height:14.66px;background:#fde98e"></div>
<div class="t" style="left:359px;width:70px;text-align:center;top:36.22px;font-size:8.2px;font-weight:700;color:#e6a21e;transform:scaleX(0.8);transform-origin:50% 0;">B</div>
<div style="position:absolute;left:429px;top:31.32px;width:115.29999999999995px;height:14.66px;background:#bdf2cb"></div>
<div class="t" style="left:429px;width:115.29999999999995px;text-align:center;top:36.22px;font-size:8.2px;font-weight:700;color:#1f8f45;transform:scaleX(0.8);transform-origin:50% 0;">A</div>
<div class="t" style="left:17.7px;top:35.72px;font-size:8.2px;color:#454545;font-weight:400;transform:scaleX(1.0641);transform-origin:0 0;">Рататуй</div>
<div class="t" style="left:80.7px;top:35.72px;font-size:8.2px;color:#454545;font-weight:400;transform:scaleX(0.8702);transform-origin:0 0;">ГАРНИРЫ</div>
<div class="t" style="left:152.7px;top:35.72px;font-size:8.2px;color:#454545;font-weight:400;transform:scaleX(1.1065);transform-origin:0 0;">(без кате...</div>
<div class="t" style="left:204.7px;top:35.72px;font-size:8.2px;color:#454545;font-weight:400;transform:scaleX(0.9819);transform-origin:0 0;">0003</div>
<div class="t" style="left:251.7px;top:35.72px;font-size:8.2px;color:#454545;font-weight:400;transform:scaleX(1.0548);transform-origin:0 0;">порц</div>
<div style="position:absolute;left:14.5px;top:46.980000000000004px;width:530.5px;height:15.66px;background:#ffffff"></div>
<div style="position:absolute;left:287px;top:46.980000000000004px;width:72px;height:14.66px;background:#fdc3cb"></div>
<div class="t" style="left:287px;width:72px;text-align:center;top:51.88px;font-size:8.2px;font-weight:700;color:#d42a40;transform:scaleX(0.8);transform-origin:50% 0;">C</div>
<div style="position:absolute;left:359px;top:46.980000000000004px;width:70px;height:14.66px;background:#fdc3cb"></div>
<div class="t" style="left:359px;width:70px;text-align:center;top:51.88px;font-size:8.2px;font-weight:700;color:#d42a40;transform:scaleX(0.8);transform-origin:50% 0;">C</div>
<div style="position:absolute;left:429px;top:46.980000000000004px;width:115.29999999999995px;height:14.66px;background:#bdf2cb"></div>
<div class="t" style="left:429px;width:115.29999999999995px;text-align:center;top:51.88px;font-size:8.2px;font-weight:700;color:#1f8f45;transform:scaleX(0.8);transform-origin:50% 0;">A</div>
<div class="t" style="left:17.7px;top:51.38px;font-size:8.2px;color:#454545;font-weight:400;transform:scaleX(1.0298);transform-origin:0 0;">Картофель</div>
<div class="t" style="left:80.7px;top:51.38px;font-size:8.2px;color:#454545;font-weight:400;transform:scaleX(0.8702);transform-origin:0 0;">ГАРНИРЫ</div>
<div class="t" style="left:152.7px;top:51.38px;font-size:8.2px;color:#454545;font-weight:400;transform:scaleX(1.1065);transform-origin:0 0;">(без кате...</div>
<div class="t" style="left:204.7px;top:51.38px;font-size:8.2px;color:#454545;font-weight:400;transform:scaleX(0.9873);transform-origin:0 0;">20822</div>
<div class="t" style="left:251.7px;top:51.38px;font-size:8.2px;color:#454545;font-weight:400;transform:scaleX(1.0548);transform-origin:0 0;">порц</div>
<div style="position:absolute;left:14.5px;top:62.64px;width:530.5px;height:15.66px;background:#f3f3f3"></div>
<div style="position:absolute;left:287px;top:62.64px;width:72px;height:14.66px;background:#fdc3cb"></div>
<div class="t" style="left:287px;width:72px;text-align:center;top:67.54px;font-size:8.2px;font-weight:700;color:#d42a40;transform:scaleX(0.8);transform-origin:50% 0;">C</div>
<div style="position:absolute;left:359px;top:62.64px;width:70px;height:14.66px;background:#fdc3cb"></div>
<div class="t" style="left:359px;width:70px;text-align:center;top:67.54px;font-size:8.2px;font-weight:700;color:#d42a40;transform:scaleX(0.8);transform-origin:50% 0;">C</div>
<div style="position:absolute;left:429px;top:62.64px;width:115.29999999999995px;height:14.66px;background:#bdf2cb"></div>
<div class="t" style="left:429px;width:115.29999999999995px;text-align:center;top:67.54px;font-size:8.2px;font-weight:700;color:#1f8f45;transform:scaleX(0.8);transform-origin:50% 0;">A</div>
<div class="t" style="left:17.7px;top:67.04px;font-size:8.2px;color:#454545;font-weight:400;transform:scaleX(0.9663);transform-origin:0 0;">Тирамису</div>
<div class="t" style="left:80.7px;top:67.04px;font-size:8.2px;color:#454545;font-weight:400;transform:scaleX(0.8611);transform-origin:0 0;">ДЕСЕРТЫ</div>
<div class="t" style="left:152.7px;top:67.04px;font-size:8.2px;color:#454545;font-weight:400;transform:scaleX(1.0390);transform-origin:0 0;">Десерт</div>
<div class="t" style="left:204.7px;top:67.04px;font-size:8.2px;color:#454545;font-weight:400;transform:scaleX(0.9819);transform-origin:0 0;">0843</div>
<div class="t" style="left:251.7px;top:67.04px;font-size:8.2px;color:#454545;font-weight:400;transform:scaleX(1.0548);transform-origin:0 0;">порц</div>
<div style="position:absolute;left:14.5px;top:78.3px;width:530.5px;height:15.66px;background:#ffffff"></div>
<div style="position:absolute;left:287px;top:78.3px;width:72px;height:14.66px;background:#fdc3cb"></div>
<div class="t" style="left:287px;width:72px;text-align:center;top:83.2px;font-size:8.2px;font-weight:700;color:#d42a40;transform:scaleX(0.8);transform-origin:50% 0;">C</div>
<div style="position:absolute;left:359px;top:78.3px;width:70px;height:14.66px;background:#fdc3cb"></div>
<div class="t" style="left:359px;width:70px;text-align:center;top:83.2px;font-size:8.2px;font-weight:700;color:#d42a40;transform:scaleX(0.8);transform-origin:50% 0;">C</div>
<div style="position:absolute;left:429px;top:78.3px;width:115.29999999999995px;height:14.66px;background:#bdf2cb"></div>
<div class="t" style="left:429px;width:115.29999999999995px;text-align:center;top:83.2px;font-size:8.2px;font-weight:700;color:#1f8f45;transform:scaleX(0.8);transform-origin:50% 0;">A</div>
<div class="t" style="left:17.7px;top:82.7px;font-size:8.2px;color:#454545;font-weight:400;transform:scaleX(0.9651);transform-origin:0 0;">Борщ</div>
<div class="t" style="left:80.7px;top:82.7px;font-size:8.2px;color:#454545;font-weight:400;transform:scaleX(0.8938);transform-origin:0 0;">СУПЫ</div>
<div class="t" style="left:152.7px;top:82.7px;font-size:8.2px;color:#454545;font-weight:400;transform:scaleX(1.0295);transform-origin:0 0;">Бизнес-л...</div>
<div class="t" style="left:204.7px;top:82.7px;font-size:8.2px;color:#454545;font-weight:400;transform:scaleX(0.9873);transform-origin:0 0;">20253</div>
<div class="t" style="left:251.7px;top:82.7px;font-size:8.2px;color:#454545;font-weight:400;transform:scaleX(1.0548);transform-origin:0 0;">порц</div>
<div style="position:absolute;left:14.5px;top:93.96000000000001px;width:530.5px;height:15.66px;background:#f3f3f3"></div>
<div style="position:absolute;left:287px;top:93.96000000000001px;width:72px;height:14.66px;background:#fdc3cb"></div>
<div class="t" style="left:287px;width:72px;text-align:center;top:98.86000000000001px;font-size:8.2px;font-weight:700;color:#d42a40;transform:scaleX(0.8);transform-origin:50% 0;">C</div>
<div style="position:absolute;left:359px;top:93.96000000000001px;width:70px;height:14.66px;background:#fdc3cb"></div>
<div class="t" style="left:359px;width:70px;text-align:center;top:98.86000000000001px;font-size:8.2px;font-weight:700;color:#d42a40;transform:scaleX(0.8);transform-origin:50% 0;">C</div>
<div style="position:absolute;left:429px;top:93.96000000000001px;width:115.29999999999995px;height:14.66px;background:#fde98e"></div>
<div class="t" style="left:429px;width:115.29999999999995px;text-align:center;top:98.86000000000001px;font-size:8.2px;font-weight:700;color:#e6a21e;transform:scaleX(0.8);transform-origin:50% 0;">B</div>
<div class="t" style="left:17.7px;top:98.36000000000001px;font-size:8.2px;color:#454545;font-weight:400;transform:scaleX(1.0054);transform-origin:0 0;">Печенье</div>
<div class="t" style="left:80.7px;top:98.36000000000001px;font-size:8.2px;color:#454545;font-weight:400;transform:scaleX(0.8787);transform-origin:0 0;">ВЫПЕЧКА</div>
<div class="t" style="left:152.7px;top:98.36000000000001px;font-size:8.2px;color:#454545;font-weight:400;transform:scaleX(1.1065);transform-origin:0 0;">(без кате...</div>
<div class="t" style="left:204.7px;top:98.36000000000001px;font-size:8.2px;color:#454545;font-weight:400;transform:scaleX(0.9819);transform-origin:0 0;">0991</div>
<div class="t" style="left:251.7px;top:98.36000000000001px;font-size:8.2px;color:#454545;font-weight:400;transform:scaleX(0.9971);transform-origin:0 0;">шт</div>
<div style="position:absolute;left:14.5px;top:109.62px;width:530.5px;height:15.66px;background:#ffffff"></div>
<div style="position:absolute;left:287px;top:109.62px;width:72px;height:14.66px;background:#fdc3cb"></div>
<div class="t" style="left:287px;width:72px;text-align:center;top:114.52000000000001px;font-size:8.2px;font-weight:700;color:#d42a40;transform:scaleX(0.8);transform-origin:50% 0;">C</div>
<div style="position:absolute;left:359px;top:109.62px;width:70px;height:14.66px;background:#fdc3cb"></div>
<div class="t" style="left:359px;width:70px;text-align:center;top:114.52000000000001px;font-size:8.2px;font-weight:700;color:#d42a40;transform:scaleX(0.8);transform-origin:50% 0;">C</div>
<div style="position:absolute;left:429px;top:109.62px;width:115.29999999999995px;height:14.66px;background:#fde98e"></div>
<div class="t" style="left:429px;width:115.29999999999995px;text-align:center;top:114.52000000000001px;font-size:8.2px;font-weight:700;color:#e6a21e;transform:scaleX(0.8);transform-origin:50% 0;">B</div>
<div class="t" style="left:17.7px;top:114.02000000000001px;font-size:8.2px;color:#454545;font-weight:400;transform:scaleX(1.0012);transform-origin:0 0;">Грибной суп</div>
<div class="t" style="left:80.7px;top:114.02000000000001px;font-size:8.2px;color:#454545;font-weight:400;transform:scaleX(0.8938);transform-origin:0 0;">СУПЫ</div>
<div class="t" style="left:152.7px;top:114.02000000000001px;font-size:8.2px;color:#454545;font-weight:400;transform:scaleX(1.0295);transform-origin:0 0;">Бизнес-л...</div>
<div class="t" style="left:204.7px;top:114.02000000000001px;font-size:8.2px;color:#454545;font-weight:400;transform:scaleX(0.9873);transform-origin:0 0;">20254</div>
<div class="t" style="left:251.7px;top:114.02000000000001px;font-size:8.2px;color:#454545;font-weight:400;transform:scaleX(1.0548);transform-origin:0 0;">порц</div>
<div style="position:absolute;left:14.5px;top:125.28px;width:530.5px;height:15.66px;background:#f3f3f3"></div>
<div style="position:absolute;left:287px;top:125.28px;width:72px;height:14.66px;background:#fdc3cb"></div>
<div class="t" style="left:287px;width:72px;text-align:center;top:130.18px;font-size:8.2px;font-weight:700;color:#d42a40;transform:scaleX(0.8);transform-origin:50% 0;">C</div>
<div style="position:absolute;left:359px;top:125.28px;width:70px;height:14.66px;background:#fdc3cb"></div>
<div class="t" style="left:359px;width:70px;text-align:center;top:130.18px;font-size:8.2px;font-weight:700;color:#d42a40;transform:scaleX(0.8);transform-origin:50% 0;">C</div>
<div style="position:absolute;left:429px;top:125.28px;width:115.29999999999995px;height:14.66px;background:#fde98e"></div>
<div class="t" style="left:429px;width:115.29999999999995px;text-align:center;top:130.18px;font-size:8.2px;font-weight:700;color:#e6a21e;transform:scaleX(0.8);transform-origin:50% 0;">B</div>
<div class="t" style="left:17.7px;top:129.68px;font-size:8.2px;color:#454545;font-weight:400;transform:scaleX(0.9896);transform-origin:0 0;">Ветчина</div>
<div class="t" style="left:80.7px;top:129.68px;font-size:8.2px;color:#454545;font-weight:400;transform:scaleX(0.9433);transform-origin:0 0;">Мясо</div>
<div class="t" style="left:152.7px;top:129.68px;font-size:8.2px;color:#454545;font-weight:400;transform:scaleX(1.1065);transform-origin:0 0;">(без кате...</div>
<div class="t" style="left:204.7px;top:129.68px;font-size:8.2px;color:#454545;font-weight:400;transform:scaleX(0.9873);transform-origin:0 0;">20369</div>
<div class="t" style="left:251.7px;top:129.68px;font-size:8.2px;color:#454545;font-weight:400;transform:scaleX(1.0548);transform-origin:0 0;">порц</div>
<div style="position:absolute;left:14.5px;top:140.94px;width:530.5px;height:15.66px;background:#ffffff"></div>
<div style="position:absolute;left:287px;top:140.94px;width:72px;height:14.66px;background:#fdc3cb"></div>
<div class="t" style="left:287px;width:72px;text-align:center;top:145.84px;font-size:8.2px;font-weight:700;color:#d42a40;transform:scaleX(0.8);transform-origin:50% 0;">C</div>
<div style="position:absolute;left:359px;top:140.94px;width:70px;height:14.66px;background:#fdc3cb"></div>
<div class="t" style="left:359px;width:70px;text-align:center;top:145.84px;font-size:8.2px;font-weight:700;color:#d42a40;transform:scaleX(0.8);transform-origin:50% 0;">C</div>
<div style="position:absolute;left:429px;top:140.94px;width:115.29999999999995px;height:14.66px;background:#fde98e"></div>
<div class="t" style="left:429px;width:115.29999999999995px;text-align:center;top:145.84px;font-size:8.2px;font-weight:700;color:#e6a21e;transform:scaleX(0.8);transform-origin:50% 0;">B</div>
<div class="t" style="left:17.7px;top:145.34px;font-size:8.2px;color:#454545;font-weight:400;transform:scaleX(0.9643);transform-origin:0 0;">Бекон</div>
<div class="t" style="left:80.7px;top:145.34px;font-size:8.2px;color:#454545;font-weight:400;transform:scaleX(0.9433);transform-origin:0 0;">Мясо</div>
<div class="t" style="left:152.7px;top:145.34px;font-size:8.2px;color:#454545;font-weight:400;transform:scaleX(1.1065);transform-origin:0 0;">(без кате...</div>
<div class="t" style="left:204.7px;top:145.34px;font-size:8.2px;color:#454545;font-weight:400;transform:scaleX(0.9873);transform-origin:0 0;">20368</div>
<div class="t" style="left:251.7px;top:145.34px;font-size:8.2px;color:#454545;font-weight:400;transform:scaleX(1.0548);transform-origin:0 0;">порц</div>
<div style="position:absolute;left:14.5px;top:156.6px;width:530.5px;height:15.66px;background:#f3f3f3"></div>
<div style="position:absolute;left:287px;top:156.6px;width:72px;height:14.66px;background:#fdc3cb"></div>
<div class="t" style="left:287px;width:72px;text-align:center;top:161.5px;font-size:8.2px;font-weight:700;color:#d42a40;transform:scaleX(0.8);transform-origin:50% 0;">C</div>
<div style="position:absolute;left:359px;top:156.6px;width:70px;height:14.66px;background:#fdc3cb"></div>
<div class="t" style="left:359px;width:70px;text-align:center;top:161.5px;font-size:8.2px;font-weight:700;color:#d42a40;transform:scaleX(0.8);transform-origin:50% 0;">C</div>
<div style="position:absolute;left:429px;top:156.6px;width:115.29999999999995px;height:14.66px;background:#fde98e"></div>
<div class="t" style="left:429px;width:115.29999999999995px;text-align:center;top:161.5px;font-size:8.2px;font-weight:700;color:#e6a21e;transform:scaleX(0.8);transform-origin:50% 0;">B</div>
<div class="t" style="left:17.7px;top:161.0px;font-size:8.2px;color:#454545;font-weight:400;transform:scaleX(1.0733);transform-origin:0 0;">Креветки</div>
<div class="t" style="left:80.7px;top:161.0px;font-size:8.2px;color:#454545;font-weight:400;transform:scaleX(0.9433);transform-origin:0 0;">Мясо</div>
<div class="t" style="left:152.7px;top:161.0px;font-size:8.2px;color:#454545;font-weight:400;transform:scaleX(1.1065);transform-origin:0 0;">(без кате...</div>
<div class="t" style="left:204.7px;top:161.0px;font-size:8.2px;color:#454545;font-weight:400;transform:scaleX(0.9873);transform-origin:0 0;">20370</div>
<div class="t" style="left:251.7px;top:161.0px;font-size:8.2px;color:#454545;font-weight:400;transform:scaleX(1.0548);transform-origin:0 0;">порц</div>
<div style="position:absolute;left:14.5px;top:172.26px;width:530.5px;height:15.66px;background:#ffffff"></div>
<div style="position:absolute;left:287px;top:172.26px;width:72px;height:14.66px;background:#fdc3cb"></div>
<div class="t" style="left:287px;width:72px;text-align:center;top:177.16px;font-size:8.2px;font-weight:700;color:#d42a40;transform:scaleX(0.8);transform-origin:50% 0;">C</div>
<div style="position:absolute;left:359px;top:172.26px;width:70px;height:14.66px;background:#fdc3cb"></div>
<div class="t" style="left:359px;width:70px;text-align:center;top:177.16px;font-size:8.2px;font-weight:700;color:#d42a40;transform:scaleX(0.8);transform-origin:50% 0;">C</div>
<div style="position:absolute;left:429px;top:172.26px;width:115.29999999999995px;height:14.66px;background:#fde98e"></div>
<div class="t" style="left:429px;width:115.29999999999995px;text-align:center;top:177.16px;font-size:8.2px;font-weight:700;color:#e6a21e;transform:scaleX(0.8);transform-origin:50% 0;">B</div>
<div class="t" style="left:152.7px;top:176.66px;font-size:8.2px;color:#454545;font-weight:400;transform:scaleX(1.1727);transform-origin:0 0;">(б</div>
<div style="position:absolute;left:14px;top:0;width:1px;height:178px;background:#d8d8d8"></div>
<div style="position:absolute;left:77px;top:0;width:1px;height:178px;background:#d8d8d8"></div>
<div style="position:absolute;left:149px;top:0;width:1px;height:178px;background:#d8d8d8"></div>
<div style="position:absolute;left:201px;top:0;width:1px;height:178px;background:#d8d8d8"></div>
<div style="position:absolute;left:248px;top:0;width:1px;height:178px;background:#d8d8d8"></div>
<div style="position:absolute;left:0;top:0;width:14px;height:178px;background:#f4f4f4"></div>
<div style="position:absolute;left:359px;top:0;width:1px;height:178px;background:rgba(190,180,190,0.3)"></div>
<div style="position:absolute;left:429px;top:0;width:1px;height:178px;background:rgba(190,180,190,0.3)"></div>
</div>
<div style="position:absolute;left:386.5px;top:262.5px;width:0;height:0;border-top:3px solid transparent;border-bottom:3px solid transparent;border-left:3px solid #555;"></div>
<div style="position:absolute;left:394px;top:243px;width:1px;height:192px;background:#d8d8d8"></div>
<div style="position:absolute;left:924.7px;top:257.8px;width:15.3px;height:177.2px;background:#ececec"></div>
<div style="position:absolute;left:927.2px;top:271.1px;width:11.8px;height:68.5px;background:#c6c6c6"></div>
<svg width="8" height="5" viewBox="0 0 8 5" style="position:absolute;left:928.5px;top:263px"><path d="M0.8 4.2 L4 1 L7.2 4.2" fill="none" stroke="#707070" stroke-width="1.2"/></svg>
<svg width="8" height="5" viewBox="0 0 8 5" style="position:absolute;left:928.5px;top:426px"><path d="M0.8 0.8 L4 4 L7.2 0.8" fill="none" stroke="#707070" stroke-width="1.2"/></svg>
<div style="position:absolute;left:380px;top:435px;width:561px;height:1px;background:#dadada"></div>
<div style="position:absolute;left:380px;top:183px;width:1px;height:275.5px;background:#cdcdcd"></div>
<div style="position:absolute;left:41px;top:458.4px;width:900px;height:10.3px;background:linear-gradient(#d4d4d4,#b4b4b4 40%,#8e8e8e 88%,#6a6a6a);"></div>
<div style="position:absolute;left:484.1px;top:462.2px;width:1.5px;height:1.6px;background:#454545"></div>
<div style="position:absolute;left:487.08000000000004px;top:462.2px;width:1.5px;height:1.6px;background:#454545"></div>
<div style="position:absolute;left:490.06px;top:462.2px;width:1.5px;height:1.6px;background:#454545"></div>
<div style="position:absolute;left:493.04px;top:462.2px;width:1.5px;height:1.6px;background:#454545"></div>
<div style="position:absolute;left:496.02000000000004px;top:462.2px;width:1.5px;height:1.6px;background:#454545"></div>
</body></html>
